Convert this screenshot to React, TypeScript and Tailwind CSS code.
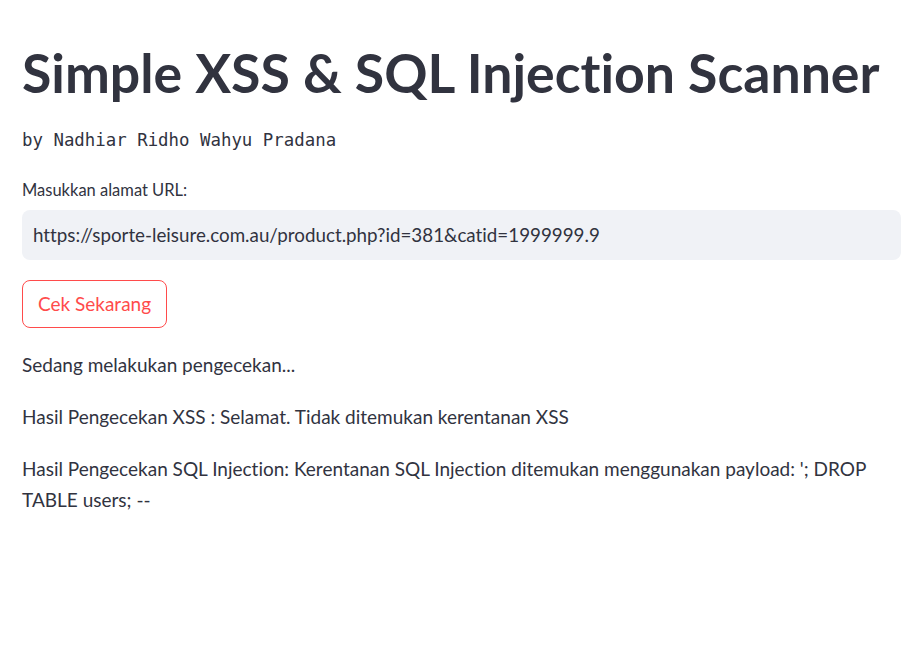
import { useState } from "react";

const sans = "font-['Lato','Noto_Sans',sans-serif] [font-variant-ligatures:none]";

export default function App() {
  const [url, setUrl] = useState(
    "https://sporte-leisure.com.au/product.php?id=381&catid=1999999.9",
  );

  return (
    <div className={`min-h-[658px] bg-white text-[#31333f] ${sans}`}>
      <div className="px-[22px] pt-[41px] pr-[17px]">
        <h1 className="text-[53.6px] font-bold leading-[62px] whitespace-nowrap">
          Simple XSS &amp; SQL Injection Scanner
        </h1>

        <div className="mt-[25px] font-['DejaVu_Sans_Mono',monospace] text-[17.4px] leading-[24px] whitespace-pre">
          by Nadhiar Ridho Wahyu Pradana
        </div>

        <label className="mt-[28px] block text-[16.5px] leading-[20px]">
          Masukkan alamat URL:
        </label>
        <div className="mt-[10px] flex h-[50px] items-center rounded-lg bg-[#f0f2f6] px-[11px]">
          <input
            value={url}
            onChange={(e) => setUrl(e.target.value)}
            className="w-full bg-transparent text-[18.8px] text-[#31333f] outline-none"
          />
        </div>

        <button className="mt-[20px] flex h-[48px] w-[145px] items-center justify-center rounded-lg border border-[#ff4b4b] bg-white text-[19px] text-[#ff4b4b]">
          Cek Sekarang
        </button>

        <div className="mt-[21px] flex flex-col gap-[21px] text-[19px] leading-[31px]">
          <p>Sedang melakukan pengecekan...</p>
          <p>Hasil Pengecekan XSS : Selamat. Tidak ditemukan kerentanan XSS</p>
          <p>
            Hasil Pengecekan SQL Injection: Kerentanan SQL Injection ditemukan
            menggunakan payload: '; DROP TABLE users; --
          </p>
        </div>
      </div>
    </div>
  );
}
